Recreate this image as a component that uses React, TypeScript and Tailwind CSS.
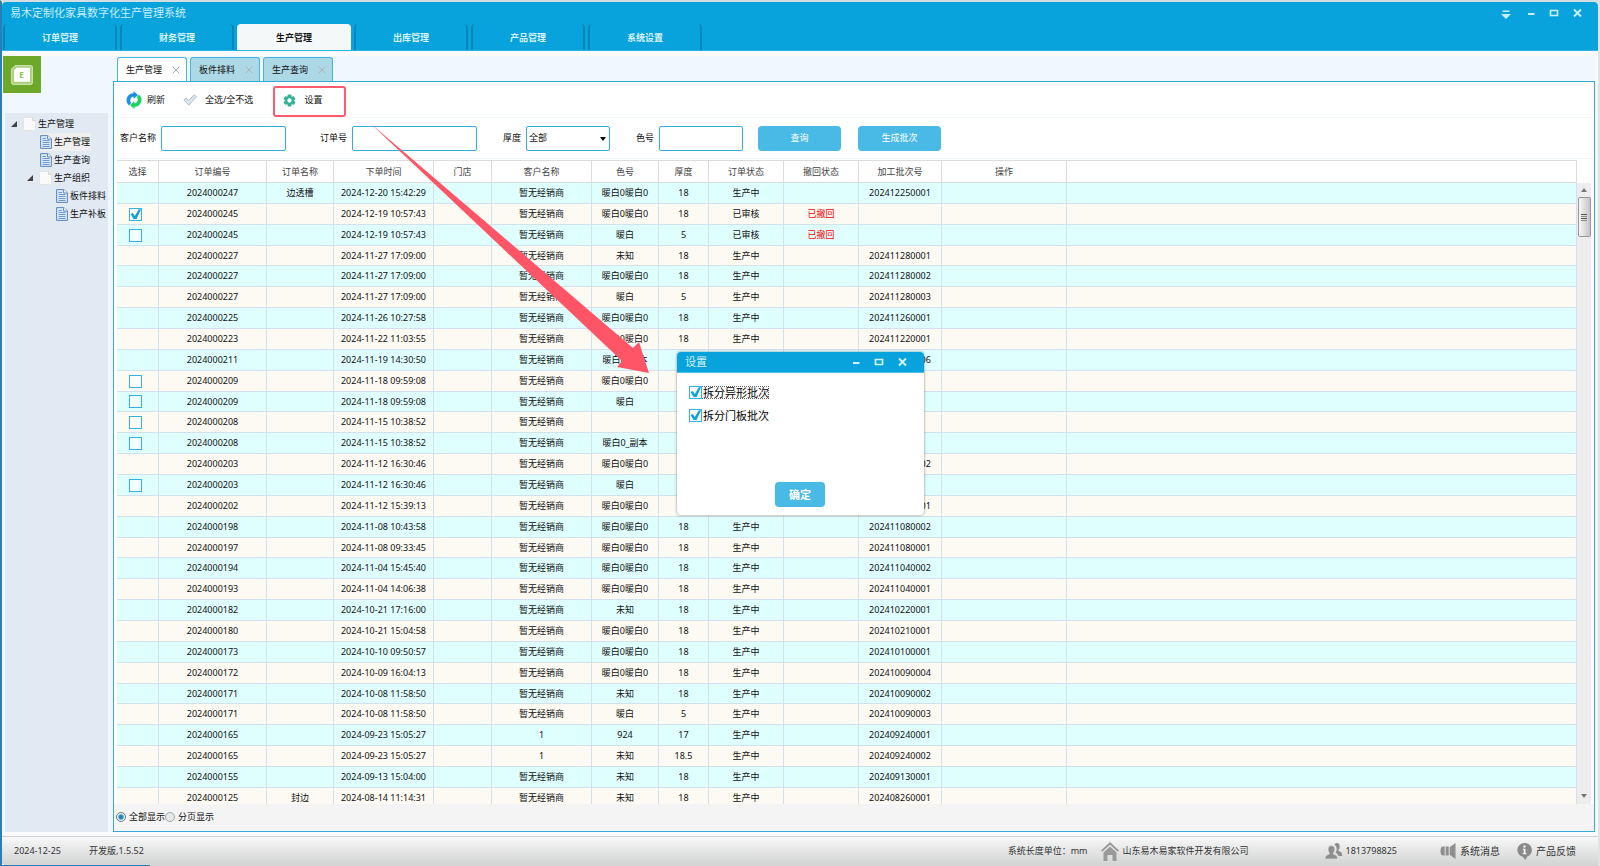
import { useState } from 'react';
import type { ReactNode } from 'react';

interface Order {
  no: string;
  name?: string;
  time: string;
  customer?: string;
  color: string;
  thick: string;
  status?: string;
  recalled?: boolean;
  batch?: string;
  check?: 'on' | 'off';
}

const orders: Order[] = [
  { no: '2024000247', name: '边透槽', time: '2024-12-20 15:42:29', color: '暖白0暖白0', thick: '18', batch: '202412250001' },
  { no: '2024000245', time: '2024-12-19 10:57:43', color: '暖白0暖白0', thick: '18', status: '已审核', recalled: true, check: 'on' },
  { no: '2024000245', time: '2024-12-19 10:57:43', color: '暖白', thick: '5', status: '已审核', recalled: true, check: 'off' },
  { no: '2024000227', time: '2024-11-27 17:09:00', color: '未知', thick: '18', batch: '202411280001' },
  { no: '2024000227', time: '2024-11-27 17:09:00', color: '暖白0暖白0', thick: '18', batch: '202411280002' },
  { no: '2024000227', time: '2024-11-27 17:09:00', color: '暖白', thick: '5', batch: '202411280003' },
  { no: '2024000225', time: '2024-11-26 10:27:58', color: '暖白0暖白0', thick: '18', batch: '202411260001' },
  { no: '2024000223', time: '2024-11-22 11:03:55', color: '暖白0暖白0', thick: '18', batch: '202411220001' },
  { no: '2024000211', time: '2024-11-19 14:30:50', color: '暖白0_副本', thick: '', status: '', batch: '202411190006' },
  { no: '2024000209', time: '2024-11-18 09:59:08', color: '暖白0暖白0', thick: '', status: '', check: 'off' },
  { no: '2024000209', time: '2024-11-18 09:59:08', color: '暖白', thick: '', status: '', check: 'off' },
  { no: '2024000208', time: '2024-11-15 10:38:52', color: '', thick: '', status: '', check: 'off' },
  { no: '2024000208', time: '2024-11-15 10:38:52', color: '暖白0_副本', thick: '', status: '', check: 'off' },
  { no: '2024000203', time: '2024-11-12 16:30:46', color: '暖白0暖白0', thick: '', status: '', batch: '202411120002' },
  { no: '2024000203', time: '2024-11-12 16:30:46', color: '暖白', thick: '', status: '', check: 'off' },
  { no: '2024000202', time: '2024-11-12 15:39:13', color: '暖白0暖白0', thick: '', status: '', batch: '202411120001' },
  { no: '2024000198', time: '2024-11-08 10:43:58', color: '暖白0暖白0', thick: '18', batch: '202411080002' },
  { no: '2024000197', time: '2024-11-08 09:33:45', color: '暖白0暖白0', thick: '18', batch: '202411080001' },
  { no: '2024000194', time: '2024-11-04 15:45:40', color: '暖白0暖白0', thick: '18', batch: '202411040002' },
  { no: '2024000193', time: '2024-11-04 14:06:38', color: '暖白0暖白0', thick: '18', batch: '202411040001' },
  { no: '2024000182', time: '2024-10-21 17:16:00', color: '未知', thick: '18', batch: '202410220001' },
  { no: '2024000180', time: '2024-10-21 15:04:58', color: '暖白0暖白0', thick: '18', batch: '202410210001' },
  { no: '2024000173', time: '2024-10-10 09:50:57', color: '暖白0暖白0', thick: '18', batch: '202410100001' },
  { no: '2024000172', time: '2024-10-09 16:04:13', color: '暖白0暖白0', thick: '18', batch: '202410090004' },
  { no: '2024000171', time: '2024-10-08 11:58:50', color: '未知', thick: '18', batch: '202410090002' },
  { no: '2024000171', time: '2024-10-08 11:58:50', color: '暖白', thick: '5', batch: '202410090003' },
  { no: '2024000165', time: '2024-09-23 15:05:27', customer: '1', color: '924', thick: '17', batch: '202409240001' },
  { no: '2024000165', time: '2024-09-23 15:05:27', customer: '1', color: '未知', thick: '18.5', batch: '202409240002' },
  { no: '2024000155', time: '2024-09-13 15:04:00', color: '未知', thick: '18', batch: '202409130001' },
  { no: '2024000125', name: '封边', time: '2024-08-14 11:14:31', color: '未知', thick: '18', batch: '202408260001' },
];

const columns = [
  { title: '选择', width: 'w-[42px]' },
  { title: '订单编号', width: 'w-[108px]' },
  { title: '订单名称', width: 'w-[67px]' },
  { title: '下单时间', width: 'w-[100px]' },
  { title: '门店', width: 'w-[58px]' },
  { title: '客户名称', width: 'w-[100px]' },
  { title: '色号', width: 'w-[67px]' },
  { title: '厚度', width: 'w-[50px]' },
  { title: '订单状态', width: 'w-[75px]' },
  { title: '撤回状态', width: 'w-[75px]' },
  { title: '加工批次号', width: 'w-[83px]' },
  { title: '操作', width: 'w-[125px]' },
  { title: '', width: '' },
];

const mainTabs = ['订单管理', '财务管理', '生产管理', '出库管理', '产品管理', '系统设置'];
const pageTabs = ['生产管理', '板件排料', '生产查询'];

function CheckBox({ id, defaultChecked, label }: { id: string; defaultChecked: boolean; label: string }) {
  return (
    <span className="relative block size-[13px] shrink-0">
      <input
        id={id}
        type="checkbox"
        aria-label={label}
        defaultChecked={defaultChecked}
        className="peer block size-[13px] appearance-none border border-[#35b2e2] bg-white/60"
      />
      <svg viewBox="0 0 13 13" className="pointer-events-none absolute inset-0 hidden size-[13px] peer-checked:block">
        <path d="M1.5 6 3.8 5 5.8 8 9.8 1.2 12 1.2 7.6 11 4.600 11Z" fill="#12a3dd" />
      </svg>
    </span>
  );
}

function WindowButtons() {
  return (
    <div className="flex items-center gap-[11px]">
      <button type="button" aria-label="最小化" className="flex size-3 items-center justify-center">
        <svg viewBox="0 0 12 12" className="size-3"><path d="M3 6h6.5v2H3z" fill="currentColor" /></svg>
      </button>
      <button type="button" aria-label="最大化" className="flex size-3 items-center justify-center">
        <svg viewBox="0 0 12 12" className="size-3"><path d="M2.5 3.5h7v5h-7z" fill="none" stroke="currentColor" strokeWidth="1.7" /></svg>
      </button>
      <button type="button" aria-label="关闭" className="flex size-3 items-center justify-center">
        <svg viewBox="0 0 12 12" className="size-3"><path d="M3 2.5l7 7M10 2.5l-7 7" stroke="currentColor" strokeWidth="1.9" /></svg>
      </button>
    </div>
  );
}

function FolderIcon() {
  return (
    <svg viewBox="0 0 13 14" className="h-[14px] w-[13px] shrink-0">
      <path d="M.5.5h9l3 3v10H.5z" fill="#fafafa" stroke="#e6e4e0" />
      <path d="M9.5.5v3h3" fill="#e9e9e9" stroke="#d8d6d2" />
    </svg>
  );
}

function DocIcon() {
  return (
    <svg viewBox="0 0 12 14" className="h-[14px] w-3 shrink-0">
      <path d="M.6.6h7.2l3.6 3.2v9.6H.6z" fill="#d9e9fa" stroke="#5c86b8" />
      <path d="M7.6.6v3.4h3.8" fill="#fff" stroke="#5c86b8" />
      <path d="M2.5 3.5h3.5M2.5 5.5h7M2.5 7.5h7M2.5 9.5h7M2.5 11.5h7" stroke="#6f99cb" />
    </svg>
  );
}

function TreeItem({ indent, folder, active, children }: { indent: string; folder?: boolean; active?: boolean; children: ReactNode }) {
  return (
    <li className={`flex h-[18px] items-center ${indent}`}>
      {folder && (
        <svg viewBox="0 0 6 6" className="mr-[6px] size-[6px] shrink-0"><path d="M6 0v6H0z" fill="#444" /></svg>
      )}
      <button type="button" className={`flex h-[18px] items-center gap-[2px] whitespace-nowrap pr-px ${active ? 'bg-[#efefef]' : ''}`}>
        {folder ? <FolderIcon /> : <DocIcon />}
        {children}
      </button>
    </li>
  );
}

function Sidebar() {
  return (
    <aside className="flex w-[111px] shrink-0 flex-col bg-[#f0f7ff] pl-[3px]">
      <div className="ml-[-2px] flex h-[37px] w-[38px] items-center justify-center bg-[#6ea82a]">
        <svg viewBox="0 0 22 20" className="h-5 w-[22px]">
          <path d="M4 .7h16q1.3 0 1.3 1.3v16q0 1.3-1.3 1.3H2Q.7 19.3.7 18V4z" fill="#a9cd7c" stroke="#d9ebc3" />
          <path d="M5.500 2.700H19v14H3V5.200z" fill="#fff" />
          <text x="10.500" y="13" textAnchor="middle" fontSize="8" fontWeight="700" fill="#8cc152" fontFamily="Noto Sans, sans-serif">E</text>
        </svg>
      </div>
      <nav className="mr-[5px] mt-5 flex-1 bg-[#e1e9f3]">
        <ul className="pt-[2px]">
          <TreeItem indent="pl-[6px]" folder>生产管理</TreeItem>
          <TreeItem indent="pl-[35px]" active>生产管理</TreeItem>
          <TreeItem indent="pl-[35px]">生产查询</TreeItem>
          <TreeItem indent="pl-[22px]" folder>生产组织</TreeItem>
          <TreeItem indent="pl-[51px]">板件排料</TreeItem>
          <TreeItem indent="pl-[51px]">生产补板</TreeItem>
        </ul>
      </nav>
    </aside>
  );
}

function Toolbar() {
  return (
    <div className="flex h-9 items-center border-b border-[#f0f8fe] pl-3">
      <button type="button" className="flex items-center gap-[5px]">
        <svg viewBox="0 0 16 18" className="h-[18px] w-4">
          <path d="M7.500 0v2.200A7 7 0 0 0 3 14.500L5.200 12A4 4 0 0 1 7.500 5.500V8L12 4z" fill="#1c8fe8" />
          <path d="M8.500 18v-2.200A7 7 0 0 0 13 3.500L10.800 6A4 4 0 0 1 8.500 12.500V10L4 14z" fill="#16d65c" />
          <path d="M4.500 10.500 7 6.500 9 9.500 11.500 7.500 9 12 7 9z" fill="#fff" />
        </svg>
        刷新
      </button>
      <button type="button" className="ml-[18px] flex items-center gap-2">
        <svg viewBox="0 0 14 12" className="h-3 w-[14px]">
          <path d="M.8 6 3.200 4 5.500 6.600 11.200.8 13.400 2.600 5.800 11.200z" fill="#dbe5ee" stroke="#a9b9c6" strokeWidth=".9" />
        </svg>
        全选/全不选
      </button>
      <button type="button" className="ml-5 flex h-[31px] w-[73px] items-center gap-2 self-end rounded-[3px] border-2 border-[#ff5a6e] pb-[3px] pl-2">
        <svg viewBox="0 0 24 24" className="size-[13px]" fill="#31b295">
          <path d="M9 1h6l1 4 4-1 3 5-3 3 3 3-3 5-4-1-1 4H9l-1-4-4 1-3-5 3-3-3-3 3-5 4 1zM12 8a4 4 0 1 0 0 8 4 4 0 0 0 0-8z" fillRule="evenodd" />
        </svg>
        设置
      </button>
    </div>
  );
}

const fieldClass = 'h-[25px] rounded-[2px] border border-[#35afe0] bg-white';

function SearchBar() {
  return (
    <div className="flex h-[41px] items-center border-b border-[#f0f8fe] pl-[6px]">
      <label htmlFor="customer" className="mr-[5px]">客户名称</label>
      <input id="customer" className={`w-[125px] px-1 ${fieldClass}`} />
      <label htmlFor="orderNo" className="ml-[34px] mr-[5px]">订单号</label>
      <input id="orderNo" className={`w-[125px] px-1 ${fieldClass}`} />
      <label htmlFor="thick" className="ml-[26px] mr-[5px]">厚度</label>
      <div className="relative">
        <select id="thick" className={`w-[84px] appearance-none pl-[2px] ${fieldClass}`}>
          <option>全部</option>
        </select>
        <svg viewBox="0 0 6 4" className="pointer-events-none absolute right-1 top-[11px] h-1 w-[6px]"><path d="M0 0h6L3 4z" fill="#000" /></svg>
      </div>
      <label htmlFor="color" className="ml-[26px] mr-[5px]">色号</label>
      <input id="color" className={`w-[84px] px-1 ${fieldClass}`} />
      <button type="button" className="ml-[15px] h-[25px] w-[83px] rounded-[4px] bg-[#49b9e6] text-white">查询</button>
      <button type="button" className="ml-[17px] h-[25px] w-[83px] rounded-[4px] bg-[#49b9e6] text-white">生成批次</button>
    </div>
  );
}

function OrderTable() {
  return (
    <div className="flex min-h-0 flex-1 pl-[3px] pr-[3px] pt-px">
      <div className="min-w-0 flex-1 overflow-hidden">
        <table className="w-full table-fixed border-separate border-spacing-0 text-center leading-3">
          <colgroup>
            {columns.map((col, i) => <col key={i} className={col.width} />)}
          </colgroup>
          <thead>
            <tr className="h-[23px] text-[#444]">
              {columns.map((col, i) => (
                <th key={i} className="border-b border-r border-t border-[#dcdcdc] bg-white p-0 font-normal">{col.title}</th>
              ))}
            </tr>
          </thead>
          <tbody className="[&_td]:whitespace-nowrap [&_td]:border-b [&_td]:border-r [&_td]:border-[#d2e0f0] [&_td]:p-0">
            {orders.map((row, i) => (
              <tr key={i} className={`${i % 7 === 3 ? 'h-5' : 'h-[21px]'} ${i % 2 ? 'bg-[#fcfaf3]' : 'bg-[#dfffff]'}`}>
                <td>
                  {row.check && (
                    <div className="ml-3">
                      <CheckBox id={`row-${i}`} defaultChecked={row.check === 'on'} label={row.no} />
                    </div>
                  )}
                </td>
                <td>{row.no}</td>
                <td>{row.name}</td>
                <td>{row.time}</td>
                <td />
                <td>{row.customer ?? '暂无经销商'}</td>
                <td>{row.color}</td>
                <td>{row.thick}</td>
                <td>{row.status ?? '生产中'}</td>
                <td className="text-[#ff0000]">{row.recalled && '已撤回'}</td>
                <td>{row.batch}</td>
                <td />
                <td />
              </tr>
            ))}
          </tbody>
        </table>
      </div>
      {/* scroll bar */}
      <div className="mt-[23px] flex w-[14px] shrink-0 flex-col items-center bg-[#ededed]">
        <svg viewBox="0 0 6 4" className="my-[5px] h-1 w-[6px]"><path d="M0 4h6L3 0z" fill="#777" /></svg>
        <div className="flex h-10 w-[13px] flex-col items-center justify-center gap-px rounded-[2px] border border-[#989898] bg-linear-to-r from-[#f7f7f7] to-[#c4c4c8]">
          <i className="h-px w-[6px] bg-[#555]" />
          <i className="h-px w-[6px] bg-[#888]" />
          <i className="h-px w-[6px] bg-[#555]" />
          <i className="h-px w-[6px] bg-[#888]" />
        </div>
        <div className="flex-1" />
        <svg viewBox="0 0 6 4" className="mb-[6px] h-1 w-[6px]"><path d="M0 0h6L3 4z" fill="#777" /></svg>
      </div>
    </div>
  );
}

function Radio({ id, defaultChecked, children }: { id: string; defaultChecked?: boolean; children: ReactNode }) {
  return (
    <label htmlFor={id} className="flex items-center gap-[3px]">
      <input
        id={id}
        name="paging"
        type="radio"
        defaultChecked={defaultChecked}
        className="size-[10px] appearance-none rounded-full border border-[#a5a5a5] bg-[#e8e8e8] checked:border-[#6c7c88] checked:bg-[radial-gradient(circle,#1b7fb4_0,#2d8dbd_35%,#eef4f8_60%)]"
      />
      {children}
    </label>
  );
}

function SettingsDialog() {
  return (
    <div role="dialog" aria-label="设置" className="absolute left-[675px] top-[350px] flex h-[163px] w-[247px] flex-col rounded-[4px] bg-white text-[11px] shadow-[0_0_3px_rgba(0,0,0,0.45)]">
      <div className="flex h-[21px] shrink-0 items-center justify-between rounded-t-[4px] border-b border-[#4fc0e8] bg-[#08a3dc] pl-2 pr-4 text-[#d5f1fb]">
        <h2>设置</h2>
        <WindowButtons />
      </div>
      <div className="flex flex-col items-start gap-[10px] pl-3 pt-[13px] leading-[13px] text-black">
        <div className="flex items-center gap-px outline outline-1 -outline-offset-1 outline-dotted outline-[#666]">
          <CheckBox id="split-shape" label="拆分异形批次" defaultChecked />
          <label htmlFor="split-shape">拆分异形批次</label>
        </div>
        <div className="flex items-center gap-px">
          <CheckBox id="split-door" label="拆分门板批次" defaultChecked />
          <label htmlFor="split-door">拆分门板批次</label>
        </div>
      </div>
      <button type="button" className="mb-2 ml-[98px] mt-auto h-[25px] w-[50px] rounded-[4px] bg-[#49b9e6] font-bold text-white">确定</button>
    </div>
  );
}

function StatusBar() {
  return (
    <footer className="flex h-[29px] shrink-0 items-center whitespace-nowrap rounded-bl-[3px] border-t border-[#d0d0d0] bg-linear-to-b from-[#f8f8f8] to-[#d2d3d3] pl-3 pr-[22px] text-[#333]">
      <span>2024-12-25</span>
      <span className="ml-7">开发版,1.5.52</span>
      <span className="ml-auto">系统长度单位：mm</span>
      <svg viewBox="0 0 18 19" className="ml-[13px] h-[19px] w-[18px]" fill="#999">
        <path d="M9 0l9 8.500-1.300 1.300L9 2.700 1.300 9.800 0 8.500z" />
        <path d="M9 4.500l6.500 6V19h-4v-6h-5v6h-4v-8.500z" />
      </svg>
      <span className="ml-1">山东易木易家软件开发有限公司</span>
      <svg viewBox="0 0 17 16" className="ml-[76px] h-4 w-[17px]" fill="#8e8e8e">
        <path d="M11.500 0q3.200 0 3.200 3.400 0 2.300-1.300 3.600l.1 1q3.500.8 3.500 3.500v1.500h-3.500q-.6-2.300-3-3.300 1.300-1.500 1.200-4.200-.2-2.500-2.200-3.700.6-1.800 2-1.800z" />
        <path d="M6.500 2.500q3.400 0 3.400 3.700 0 2.400-1.400 3.900l.1 1.100q4 .9 4 3.800v1H0v-1q0-2.900 4-3.800l.3-1.100Q3 8.600 3 6.200q0-3.700 3.500-3.700z" stroke="#e8e8e8" strokeWidth=".6" />
      </svg>
      <span className="ml-1">1813798825</span>
      <button type="button" className="ml-[43px] flex items-center gap-1 text-[10px]">
        <svg viewBox="0 0 16 16" className="size-4" fill="#8e8e8e">
          <path d="M3 3.500h1.700v9H3Q.5 12.500.5 8T3 3.500zM5.700 3.500h3v9h-3zM9.700 4.200 15.500 0v16l-5.800-4.200z" />
        </svg>
        系统消息
      </button>
      <button type="button" className="ml-[17px] flex items-center gap-1 text-[10px]">
        <svg viewBox="0 0 15 17" className="h-[17px] w-[15px]">
          <path d="M7.500 0a7 7 0 0 1 2.700 13.600L8.500 17l-2.800-3.200A7 7 0 0 1 7.500 0z" fill="#8a8a8a" />
          <circle cx="7.500" cy="3.500" r="1.200" fill="#f2f2f2" />
          <path d="M5.800 5.700h2.700v4.300h1v1.200H5.700V10h1V6.900h-.9z" fill="#f2f2f2" />
        </svg>
        产品反馈
      </button>
    </footer>
  );
}

export default function App() {
  const [mainTab, setMainTab] = useState(2);
  const [pageTab, setPageTab] = useState(0);

  return (
    <div className="relative flex h-screen flex-col overflow-hidden border-l-2 border-r-2 border-t-2 border-l-[#2a7fb8] border-r-[#dfe3e6] border-t-[#d5dde1] bg-[#f9fafb] font-['Noto_Sans','Noto_Sans_CJK_SC',sans-serif] text-[9px] leading-3 text-[#111]">
      <header className="flex h-[49px] shrink-0 flex-col rounded-t-[4px] border-b border-[#2fb2e2] bg-[#08a3dc]">
        <div className="flex h-[22px] shrink-0 items-center justify-between pl-2 pr-[15px] text-[#c9edfa]">
          <h1 className="text-[11px]">易木定制化家具数字化生产管理系统</h1>
          <div className="flex items-center gap-[13px]">
            <button type="button" aria-label="菜单" className="flex size-3 items-center justify-center">
              <svg viewBox="0 0 12 12" className="size-3"><path d="M2.500 3.500h7V5h-7zM1 7h10l-5 5z" fill="currentColor" /></svg>
            </button>
            <WindowButtons />
          </div>
        </div>
        <nav className="flex min-h-0 flex-1 gap-[3px] pl-px">
          {mainTabs.map((tab, i) => (
            <button
              key={tab}
              type="button"
              onClick={() => setMainTab(i)}
              className={`w-[114px] rounded-t-[4px] pt-[2px] font-bold ${
                i === mainTab ? 'bg-[#f5f8f8] text-[#111]' : 'border-l-2 border-r-2 border-[#0a86b8] text-[#d8f2fc]'
              }`}
            >
              {tab}
            </button>
          ))}
        </nav>
      </header>

      <div className="flex min-h-0 flex-1 pb-1 pr-[3px] pt-[5px]">
        <Sidebar />
        <main className="flex min-w-0 flex-1 flex-col">
          <div className="flex h-[25px] shrink-0 items-end gap-[3px] bg-[#f0f7ff] pl-[4px]">
            {pageTabs.map((tab, i) => (
              <div
                key={tab}
                className={`flex h-6 w-[70px] items-center justify-between rounded-t-[3px] border border-b-0 border-[#45b4e2] pl-2 pr-[6px] ${
                  i === pageTab ? '-mb-px h-[25px] bg-white' : 'bg-[#add8e6]'
                }`}
              >
                <button type="button" onClick={() => setPageTab(i)} className="whitespace-nowrap">{tab}</button>
                <button type="button" aria-label="关闭标签">
                  <svg viewBox="0 0 8 8" className="size-2"><path d="M.8.8l6.400 6.400M7.200.8L.8 7.200" stroke="#a9b4b9" strokeWidth="1" /></svg>
                </button>
              </div>
            ))}
          </div>
          <div className="flex min-h-0 flex-1 flex-col border border-[#36aadb] bg-white">
            <Toolbar />
            <SearchBar />
            <OrderTable />
            <div className="flex h-[27px] shrink-0 items-center bg-[#f4f4f4] pb-[2px] pl-[2px]">
              <Radio id="show-all" defaultChecked>全部显示</Radio>
              <Radio id="show-paged">分页显示</Radio>
            </div>
          </div>
        </main>
      </div>

      <StatusBar />
      <div className="flex h-px shrink-0 bg-[#d5d5d5]">
        <div className="w-[148px] bg-[#2a7fb8]" />
      </div>

      {/* arrow from the settings button to the dialog */}
      <svg viewBox="0 0 280 252" className="pointer-events-none absolute left-[368px] top-[121px] h-[252px] w-[280px]">
        <path d="M0 0 263 225 269 219 279 250 247 244 252 238z" fill="#ff5566" />
      </svg>
      <SettingsDialog />
    </div>
  );
}
